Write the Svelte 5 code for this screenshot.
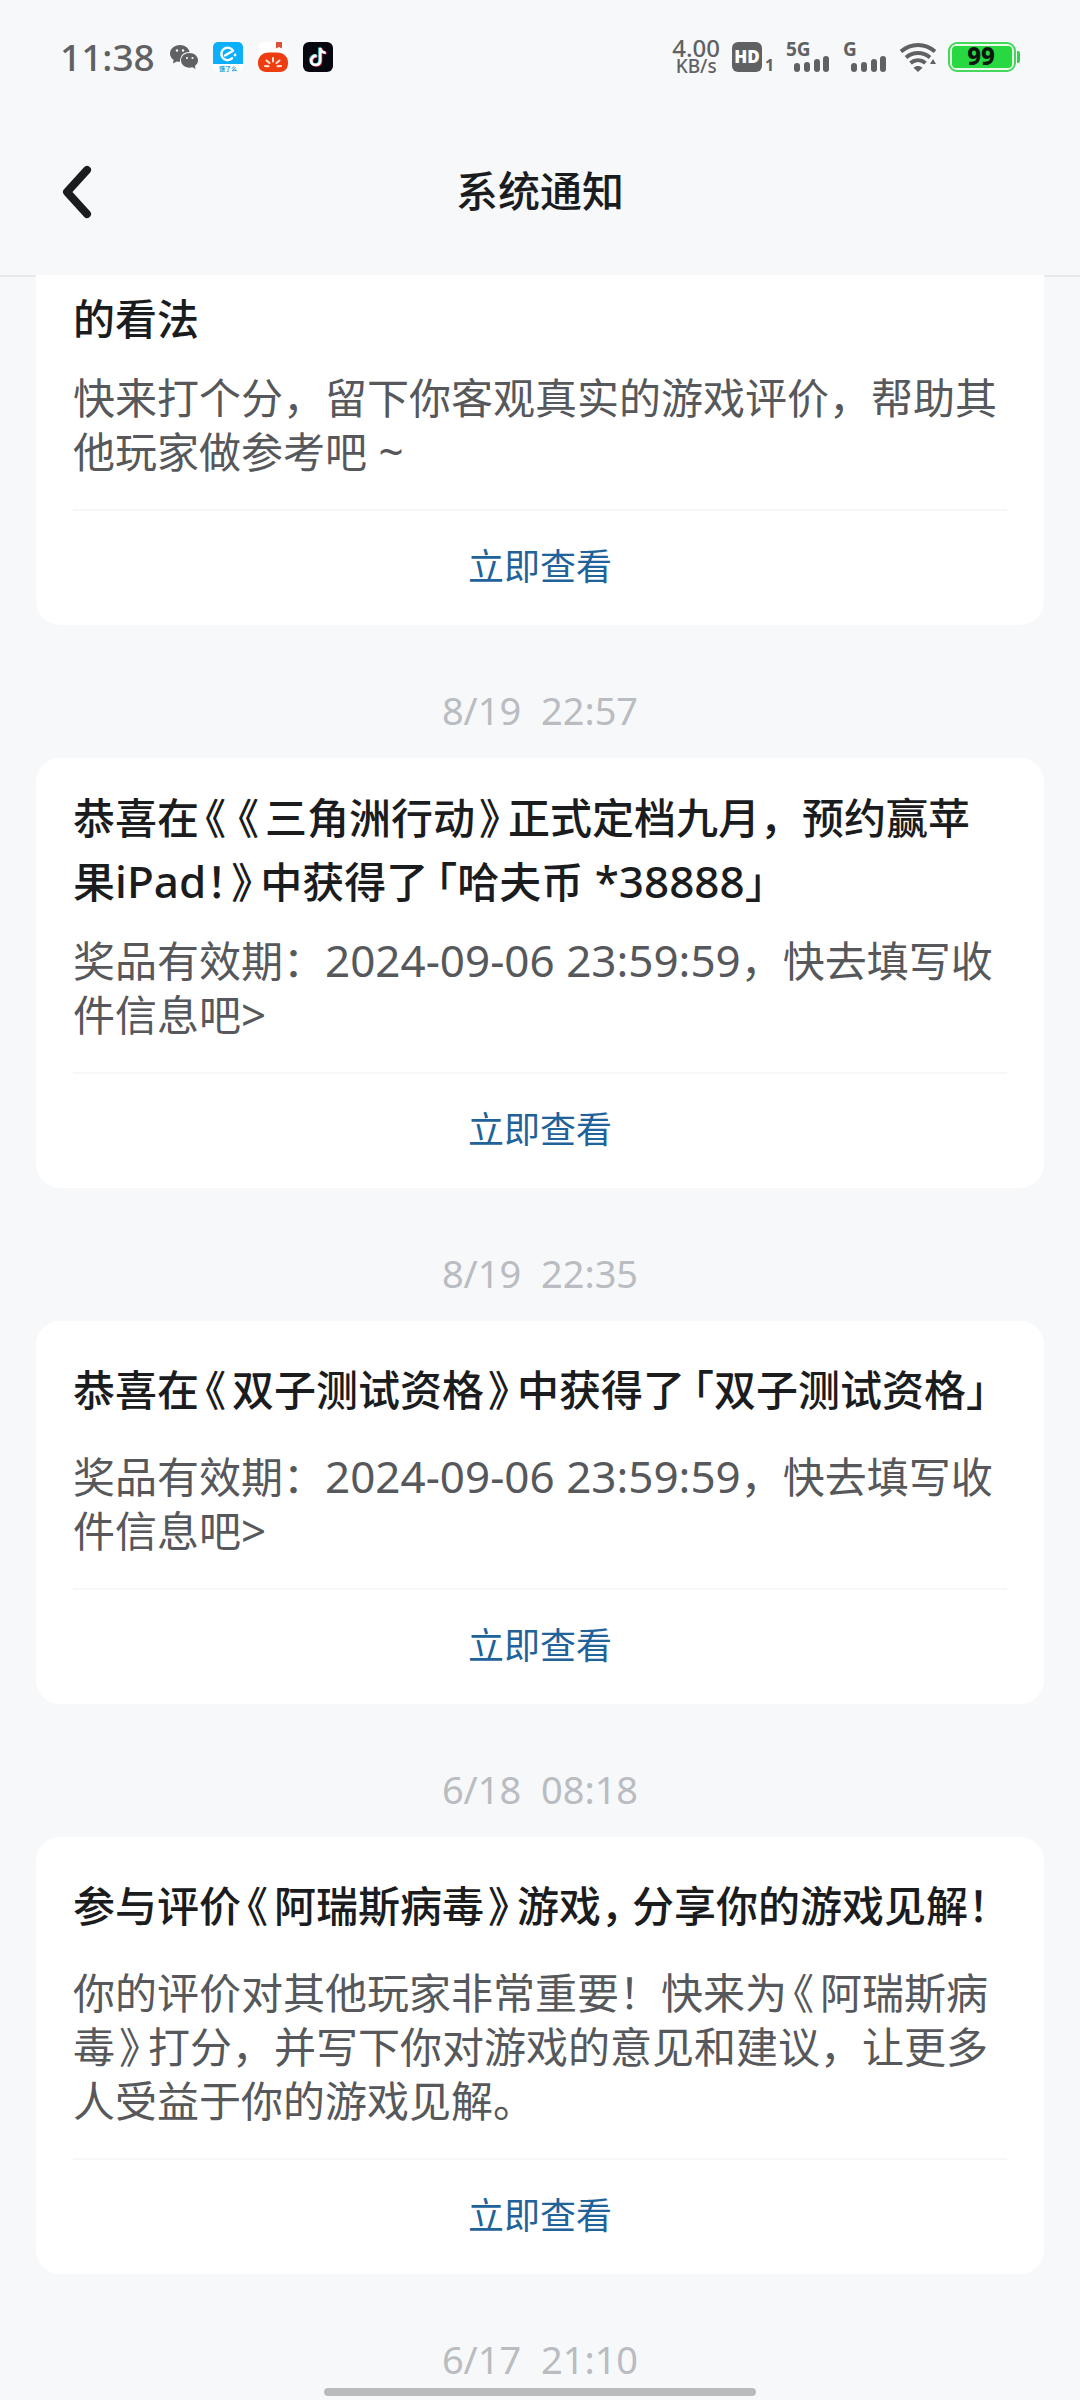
<script lang="ts">
  type Notice = {
    title: string;
    body: string;
    time?: string;
    narrow?: string;
    clipped?: boolean;
  };
  type Run = { text: string; kind: string };

  const notices: Notice[] = [
    {
      title: "的看法",
      body: "快来打个分，留下你客观真实的游戏评价，帮助其他玩家做参考吧 ~",
      clipped: true,
    },
    {
      time: "8/19  22:57",
      title: "恭喜在《《三角洲行动》正式定档九月，预约赢苹果iPad！》中获得了「哈夫币 *38888」",
      body: "奖品有效期：2024-09-06 23:59:59，快去填写收件信息吧>",
    },
    {
      time: "8/19  22:35",
      title: "恭喜在《双子测试资格》中获得了「双子测试资格」",
      body: "奖品有效期：2024-09-06 23:59:59，快去填写收件信息吧>",
    },
    {
      time: "6/18  08:18",
      title: "参与评价《阿瑞斯病毒》游戏，分享你的游戏见解！",
      body: "你的评价对其他玩家非常重要！快来为《阿瑞斯病毒》打分，并写下你对游戏的意见和建议，让更多人受益于你的游戏见解。",
      narrow: "《》「」！，",
    },
  ];
  const nextTime = "6/17  21:10";

  const marks: Record<string, string> = {
    "《": "narrow title-open",
    "》": "narrow title-close",
    "「": "narrow corner",
    "，": "narrow comma",
  };

  // brackets are set narrower than a full square, latin runs a little larger
  function split(text: string, narrow: string): Run[] {
    const parts = text.match(/[\x20-\x7e]+|[《》「」！，]|[^\x20-\x7e《》「」！，]+/g) ?? [];
    return parts.map((part) => {
      if (/^[\x20-\x7e]/.test(part)) return { text: part, kind: "latin" };
      if (!narrow.includes(part)) return { text: part, kind: "han" };
      return { text: part, kind: marks[part] ?? "narrow" };
    });
  }
</script>

{#snippet runs(text: string, narrow: string)}
  {#each split(text, narrow) as run}<span class={run.kind}>{run.text}</span>{/each}
{/snippet}

{#snippet bars()}
  <rect x="8" y="21" width="6" height="9" rx="3" />
  <rect x="18" y="20" width="6" height="10" rx="3" />
  <rect x="28" y="17" width="6" height="13" rx="3" />
  <rect x="37" y="14" width="6" height="16" rx="3" />
{/snippet}

<div class="screen">
  <header>
    <div class="status">
      <div class="group left">
        <span class="clock">11:38</span>
        <svg width="28" height="26" viewBox="0 0 28 26">
          <path fill="#606163" d="M10 1C4.500 1 0 4.700 0 9.400c0 2.600 1.400 4.900 3.600 6.400L3 19.500l3.700-2.100c1 .3 2.100.4 3.300.4C10 11 14 8 19.600 8 18.800 4 14.800 1 10 1z" />
          <path fill="#606163" d="M19.500 9c-4.800 0-8.500 3.200-8.500 7.300s3.800 7.400 8.500 7.400c1 0 2-.2 2.900-.4l3.200 1.700-.7-3c1.900-1.400 3.100-3.400 3.100-5.700C28 12.200 24.200 9 19.500 9z" />
          <g fill="#f7f8fa"><circle cx="7" cy="6.500" r="1.200" /><circle cx="13" cy="6.500" r="1.200" /><circle cx="17" cy="14" r="1.100" /><circle cx="22.500" cy="14" r="1.100" /></g>
        </svg>
        <svg width="30" height="30" viewBox="0 0 30 30">
          <rect width="30" height="30" rx="5" fill="#fff" />
          <path d="M5 0h20a5 5 0 0 1 5 5v17H0V5a5 5 0 0 1 5-5z" fill="#0cb0fa" />
          <path d="M12 13.500l8-4.800c-1.800-3-5.500-4-8.500-2.200s-4 5.500-2.300 8.500 5.500 4 8.500 2.200l1.300-1" fill="none" stroke="#fff" stroke-width="2.400" stroke-linecap="round" stroke-linejoin="round" />
          <circle cx="22" cy="13" r="1.400" fill="#fff" />
          <text x="15" y="29" text-anchor="middle" font-size="6" font-weight="700" fill="#2f9fd0">饿了么</text>
        </svg>
        <svg width="30" height="30" viewBox="0 0 30 30">
          <rect width="30" height="30" rx="6" fill="#fff" />
          <path d="M18 0h6v6.500l-3-1.500-3 1.500z" fill="#dd5138" />
          <path d="M11 10.500h8c7 0 11 4.500 11 10 0 6-3 9.500-8 9.500H8c-5 0-8-3.500-8-9.500 0-5.500 4-10 11-10z" fill="#ee3d10" />
          <path d="M7 24l3.500.2M8.500 18.500l3 2.500M15 16v3.500M21.500 18.500l-3 2.500M23 24l-3.500.2" stroke="#ffe6d8" stroke-width="2" stroke-linecap="round" />
        </svg>
        <svg width="30" height="30" viewBox="0 0 30 30">
          <rect width="30" height="30" rx="6" fill="#07070f" />
          <g fill="none" stroke-width="2.600">
            <path d="M13 13.500c-3-.5-5.500 1.500-5.500 4.700 0 5.800 9 5.800 9 0V5.500c.6 3 2.600 4.500 5.500 4.800" stroke="#37d6d2" />
            <path d="M14.500 14.500c-3-.5-5.500 1.500-5.500 4.700 0 5.800 9 5.800 9 0V6.500c.6 3 2.600 4.500 5.500 4.800" stroke="#f03a5c" />
            <path d="M13.700 14c-3-.5-5.500 1.500-5.500 4.700 0 5.800 9 5.800 9 0V6c.6 3 2.600 4.500 5.500 4.800" stroke="#fff" />
          </g>
        </svg>
      </div>
      <div class="group right">
        <div class="speed"><span>4.00</span><small>KB/s</small></div>
        <svg width="42" height="30" viewBox="0 0 42 30">
          <rect width="30" height="30" rx="6" fill="#606163" />
          <text x="15" y="21" text-anchor="middle" font-size="17" font-weight="900" fill="#fff">HD</text>
          <text x="33" y="29" font-size="16" font-weight="700" fill="#606163">1</text>
        </svg>
        <svg width="45" height="30" viewBox="0 0 45 30" fill="#606163">
          <text x="0" y="14" font-size="19" font-weight="700">5G</text>
          {@render bars()}
        </svg>
        <svg width="45" height="30" viewBox="0 0 45 30" fill="#606163">
          <text x="0" y="14" font-size="19" font-weight="700">G</text>
          {@render bars()}
        </svg>
        <svg width="36" height="30" viewBox="0 0 36 30">
          <g fill="none" stroke="#606163" stroke-width="4">
            <path d="M1 9.500C11 .8 25 .8 35 9.500" />
            <path d="M6 15.500c7-6 17-6 24 0" />
            <path d="M10.500 21c4.500-3.700 10.500-3.700 15 0" />
          </g>
          <path d="M18 30l-4.500-4.300c2.700-2.200 6.300-2.200 9 0z" fill="#606163" />
          <path d="M30 22l3-5 3 5z" fill="#606163" />
        </svg>
        <svg width="72" height="30" viewBox="0 0 72 30">
          <rect x="1" y="1" width="66" height="28" rx="8" fill="#eafbea" stroke="#45d75c" stroke-width="2" />
          <rect x="4" y="4" width="60" height="22" rx="4" fill="#27d840" />
          <path d="M69 9h1a2 2 0 0 1 2 2v8a2 2 0 0 1-2 2h-1z" fill="#27d840" />
          <text x="33" y="23" text-anchor="middle" font-size="24" font-weight="800" fill="#0a150b">99</text>
        </svg>
      </div>
    </div>
    <nav>
      <button class="back" aria-label="返回">
        <svg width="32" height="54" viewBox="0 0 32 54">
          <path d="M26 5L6 27l20 22" fill="none" stroke="#1b1c1e" stroke-width="8" stroke-linecap="round" stroke-linejoin="round" />
        </svg>
      </button>
      <h1>系统通知</h1>
      <span></span>
    </nav>
  </header>

  <main>
    {#each notices as notice}
      {#if notice.time}
        <time>{notice.time}</time>
      {/if}
      <article class:clipped={notice.clipped}>
        <h2><span>{@render runs(notice.title, notice.narrow ?? "《》「」！")}</span></h2>
        <p>{@render runs(notice.body, "《》")}</p>
        <button class="view">立即查看</button>
      </article>
    {/each}
    <time>{nextTime}</time>
  </main>

  <div class="home-bar"></div>
</div>

<style>
  :global(body) {
    background: #f7f8fa;
  }

  .screen {
    height: 100vh;
    overflow: hidden;
    background: #f7f8fa;
    color: #1b1c1e;
    font-family: "Noto Sans CJK SC", sans-serif;
    text-spacing-trim: space-all;
  }

  svg {
    overflow: visible;
  }

  header {
    border-bottom: 2px solid #e6e8eb;
  }

  .status {
    display: flex;
    justify-content: space-between;
    align-items: center;
    box-sizing: border-box;
    height: 109px;
    padding: 5px 60px 0;
    color: #606163;
    font-family: "Noto Sans", "Noto Sans CJK SC", sans-serif;
  }

  .group {
    display: flex;
    align-items: center;
  }

  .left {
    gap: 15px;
  }

  .right {
    gap: 12px;
  }

  .clock {
    font-size: 37px;
    font-weight: 500;
    line-height: 40px;
  }

  .speed {
    display: flex;
    flex-direction: column;
    align-items: center;
    font-size: 24px;
    font-weight: 500;
    line-height: 18px;
  }

  .speed small {
    font-size: 19px;
  }

  nav {
    display: grid;
    grid-template-columns: 1fr auto 1fr;
    align-items: center;
    height: 166px;
    padding: 0 61px;
  }

  button {
    border: none;
    background: none;
    padding: 0;
    font-family: inherit;
    cursor: pointer;
  }

  .back {
    display: flex;
    justify-self: start;
  }

  h1,
  h2 {
    margin: 0;
    font-size: 42px;
    font-weight: 500;
    line-height: 64px;
  }

  h1 {
    padding-bottom: 6px;
  }

  main {
    position: relative;
    margin-top: -2px;
    padding: 0 36px;
  }

  time {
    display: block;
    padding: 59px 0 22px;
    color: #b9bcc1;
    font-family: "Noto Sans", sans-serif;
    font-size: 38px;
    line-height: 52px;
    text-align: center;
    white-space: pre;
  }

  article {
    padding: 26px 37px 0;
    border-radius: 24px;
    background: #fff;
  }

  .clipped {
    padding-top: 10px;
    border-radius: 0 0 24px 24px;
  }

  h2 {
    display: flex;
    align-items: center;
    min-height: 81px;
  }

  .clipped h2 {
    min-height: 64px;
  }

  p {
    margin: 20px 0 32px;
    color: #56585b;
    font-size: 42px;
    line-height: 54px;
  }

  .latin {
    font-family: "Noto Sans", sans-serif;
    font-size: 44px;
    line-height: 1;
  }

  .narrow {
    font-feature-settings: "halt";
  }

  .title-open {
    padding: 0 6px;
  }

  .title-close {
    padding: 0 8px 0 4px;
  }

  .corner {
    padding-left: 8px;
  }

  .comma {
    padding-right: 10px;
  }

  .view {
    display: block;
    width: 100%;
    height: 116px;
    padding-bottom: 8px;
    border-top: 2px solid #f6f7f8;
    color: #1f639a;
    font-size: 36px;
  }

  .home-bar {
    position: fixed;
    bottom: 4px;
    left: 30%;
    right: 30%;
    height: 8px;
    border-radius: 4px;
    background: #b9bbbd;
  }
</style>
